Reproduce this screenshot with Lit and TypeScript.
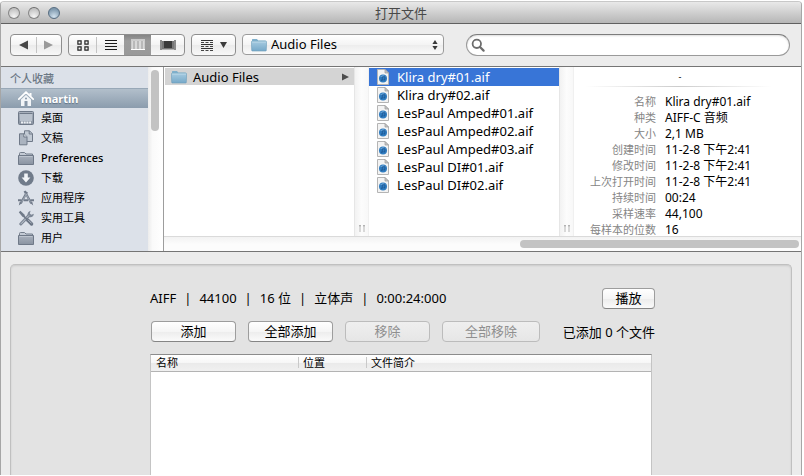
import { LitElement, html, css, svg } from "lit";
import { customElement, state } from "lit/decorators.js";

const folderBlue = svg`<svg class="ico" viewBox="0 0 16 16" width="16" height="16" aria-hidden="true">
  <defs><linearGradient id="fb" x1="0" y1="0" x2="0" y2="1"><stop offset="0" stop-color="#a6cbe0"/><stop offset="1" stop-color="#76a9c9"/></linearGradient></defs>
  <path d="M1 4V2.6Q1 2 1.6 2H6L7.2 3.4H14.4Q15 3.4 15 4V6H1Z" fill="#7fb0cc"/>
  <path d="M0.4 4.8Q0.4 4.3 1 4.3H15Q15.6 4.3 15.6 4.8L15.3 13.4Q15.2 14 14.6 14H1.4Q0.8 14 0.7 13.4Z" fill="url(#fb)" stroke="#6b9dbb" stroke-width=".6"/>
  <path d="M1 5H15" stroke="#c5e0ee" stroke-width=".8"/>
</svg>`;

const audioFile = svg`<svg class="ico" viewBox="0 0 14 16" width="14" height="16" aria-hidden="true">
  <path d="M1.5 .5H9L12.5 4V15.5H1.5Z" fill="#f3f3f3" stroke="#b4b4b4"/>
  <path d="M9 .5V4H12.5Z" fill="#c9c9c9" stroke="#9a9a9a" stroke-width=".7"/>
  <circle cx="7" cy="9.5" r="4" fill="#2f7cc0"/>
  <path d="M4 8A3.6 3.6 0 0 1 10 8Q7 6.6 4 8Z" fill="#9cc8ea"/>
  <path d="M6.3 11.2V8L8.8 7.5V10.7" fill="none" stroke="#1d5590" stroke-width=".8"/>
  <circle cx="5.8" cy="11.2" r=".7" fill="#1d5590"/><circle cx="8.2" cy="10.8" r=".7" fill="#1d5590"/>
</svg>`;

const greyFolder = svg`<path d="M1.5 5V3.5Q1.5 2.5 2.5 2.5H6.5L8 4H14.5V5" fill="#c3cad4" stroke="#737d8b"/><path d="M.5 5.5H15.5V14.5H.5Z" fill="url(#sg)" stroke="#6f7988"/><path d="M1.5 6.5H14.5" stroke="#c3cad3" stroke-width=".8"/>`;

const sideIcons: Record<string, unknown> = {
  home: svg`<path d="M8 1.2L.8 8.2M8 1.2L15.2 8.2" stroke="#fff" stroke-width="1.7" fill="none" stroke-linecap="round"/><path d="M11.5 2H13.5V5.5L11.5 4Z" fill="#fff"/><path d="M8 4L13 8.6V15H3V8.6Z" fill="#f2f5f8"/><path d="M6.5 10H9.5V15H6.5Z" fill="#8797a8"/><circle cx="8" cy="7.6" r="1" fill="#8797a8"/>`,
  desktop: svg`<rect x=".5" y="1.5" width="15" height="13" rx="1" fill="url(#sg)" stroke="#6f7988"/><path d="M1.5 3.5H14.5" stroke="#6f7988"/><rect x="2" y="4" width="12" height="7" fill="#b9c1cc"/><path d="M3 12.5H13" stroke="#edf0f4" stroke-width="2" stroke-dasharray="2 .7"/>`,
  docs: svg`<path d="M6.5 .8H11.5L14.5 3.8V11.5H6.5Z" fill="#c2cad4" stroke="#6f7988"/><path d="M11.2 .8V4H14.5" fill="none" stroke="#6f7988"/><path d="M1.5 3.8H6L9 6.8V14.8H1.5Z" fill="#aab3bf" stroke="#6f7988"/><path d="M5.8 3.8V7H9" fill="#dfe4ea" stroke="#6f7988"/>`,
  folder: greyFolder,
  download: svg`<circle cx="8" cy="8" r="7.8" fill="#707b8a"/><path d="M6.2 3.5H9.8V7.6H12.4L8 12.4L3.6 7.6H6.2Z" fill="#f2f5f8"/>`,
  apps: svg`<g fill="none" stroke="#6f7988" stroke-width="2.2"><path d="M9 2L2.8 13.2"/><path d="M6.6 1L13.2 13.2"/><path d="M0 10.2H3.6M5.8 10.2H10M12.4 10.2H16" stroke-width="2"/></g><path d="M1.6 12L3.8 13.2L.8 15.6Z M12.2 13L14.3 12L15.2 15.4Z" fill="#6f7988"/><path d="M8.2 4L3.6 12.4M7.6 3.2L12.6 12.4" stroke="#bcc4ce" stroke-width=".6"/>`,
  tools: svg`<path d="M2.8 14L10.8 5.6" stroke="#7d8796" stroke-width="3" stroke-linecap="round"/><path d="M9.6 5.8Q9 2 12.6 .8L11.8 3.4L13.3 4.8L15.8 3.8Q15.6 7.8 11.4 7.2Z" fill="#7d8796"/><path d="M3 13.8L11 5.4" stroke="#c0c7d0" stroke-width="1"/><path d="M.8 2.2L2.4 .8L6.6 4.8L7.2 7.8L4.4 6.8Z" fill="#707a89"/><path d="M6 6.4L9.4 9.8" stroke="#707a89" stroke-width="1.6"/><path d="M9.6 10L13.6 14" stroke="#6b7584" stroke-width="3.2" stroke-linecap="round"/><path d="M10 9.8L13.6 13.4" stroke="#b5bdc8" stroke-width=".9"/>`,
};

const places = [
  ["home", "martin"],
  ["desktop", "桌面"],
  ["docs", "文稿"],
  ["folder", "Preferences"],
  ["download", "下载"],
  ["apps", "应用程序"],
  ["tools", "实用工具"],
  ["folder", "用户"],
];

const files = [
  "Klira dry#01.aif",
  "Klira dry#02.aif",
  "LesPaul Amped#01.aif",
  "LesPaul Amped#02.aif",
  "LesPaul Amped#03.aif",
  "LesPaul DI#01.aif",
  "LesPaul DI#02.aif",
];

const details = [
  ["名称", "Klira dry#01.aif"],
  ["种类", "AIFF-C 音频"],
  ["大小", "2,1 MB"],
  ["创建时间", "11-2-8 下午2:41"],
  ["修改时间", "11-2-8 下午2:41"],
  ["上次打开时间", "11-2-8 下午2:41"],
  ["持续时间", "00:24"],
  ["采样速率", "44,100"],
  ["每样本的位数", "16"],
];

@customElement("app-root")
export class AppRoot extends LitElement {
  @state() private place = 0;
  @state() private file = 0;
  @state() private view = 2;

  static styles = css`
    :host {
      display: block;
      box-sizing: border-box;
      min-height: 100vh;
      padding: 1px 2px 1px 0;
      background: #fff;
      font: 13px/18px "Noto Sans", "Noto Sans CJK SC", sans-serif;
      color: #000;
    }
    * { box-sizing: border-box; }
    button, input, select { font: inherit; color: inherit; margin: 0; padding: 0; }
    button { border: 0; background: none; }
    ul, dl, dd { margin: 0; padding: 0; list-style: none; }
    svg { display: block; flex: none; }

    .window {
      display: flex;
      flex-direction: column;
      min-height: calc(100vh - 2px);
      border: 1px solid #a6a6a6;
      border-top-color: #c8c8c8;
      border-bottom: 0;
      border-radius: 4px 4px 0 0;
      background: #ececec;
      overflow: hidden;
    }
    .titlebar {
      display: grid;
      grid-template-columns: 1fr auto 1fr;
      align-items: center;
      height: 22px;
      padding: 0 7px;
      border-bottom: 1px solid #606060;
      background: linear-gradient(#e9e9e9, #b6b6b6);
    }
    .title { margin: 0; font-size: 13px; font-weight: 400; color: #484848; }
    .lights { display: flex; gap: 8px; }
    .light {
      width: 12px;
      height: 12px;
      border: 1px solid #858585;
      border-top-color: #6c6c6c;
      border-radius: 50%;
      background: radial-gradient(circle at 50% 85%, #f5f5f5, #c3c3c3 75%);
    }
    .light.zoom {
      border-color: #566c80;
      background: radial-gradient(circle at 50% 85%, #d2e2ee, #7f99ae 75%);
    }

    .toolbar {
      display: flex;
      align-items: flex-start;
      gap: 6px;
      height: 43px;
      padding: 10px 11px 0 9px;
      border-bottom: 1px solid #757575;
    }
    .group {
      display: flex;
      align-items: center;
      height: 22px;
      border: 1px solid #8e8e8e;
      border-radius: 4px;
      background: linear-gradient(#fff, #f3f3f3 50%, #ebebeb 51%, #f8f8f8);
      overflow: hidden;
    }
    .group.nav { width: 52px; }
    .seg { display: flex; align-items: center; justify-content: center; width: 27px; height: 20px; }
    .wide { width: 33px; }
    .arrange { width: 43px; gap: 7px; }
    .seg.on { background: linear-gradient(#858585, #9c9c9c 30%, #999); }
    .rule { flex: none; width: 1px; height: 16px; background: #c4c4c4; }
    .popup {
      display: flex;
      align-items: center;
      position: relative;
      width: 202px;
      height: 21px;
      margin: 0 16px 0 0;
      border: 1px solid #9b9b9b;
      border-radius: 4px;
      background: linear-gradient(#fff, #f4f4f4 50%, #ececec 51%, #fafafa);
    }
    .popup svg { position: absolute; pointer-events: none; }
    .popup .ico { left: 8px; }
    .popup .updown { right: 5px; }
    .popup select {
      appearance: none;
      width: 100%;
      height: 19px;
      padding: 0 0 1px 28px;
      border: 0;
      background: none;
    }
    .search { display: flex; align-items: center; position: relative; flex: 1; height: 22px; }
    .search svg { position: absolute; left: 5px; }
    .search input {
      appearance: none;
      width: 100%;
      height: 22px;
      padding: 0 12px 0 24px;
      border: 1px solid #9a9a9a;
      border-top-color: #7d7d7d;
      border-radius: 11px;
      background: #fff;
      box-shadow: inset 0 1px 2px #ddd;
      outline: 0;
    }

    .browser { display: flex; border-bottom: 1px solid #757575; background: #fff; }
    .sidebar { width: 147px; padding-bottom: 3px; background: #dce1e9; font-size: 11px; }
    .heading { margin: 0; padding: 3px 0 0 9px; font-size: 11px; font-weight: 500; line-height: 18px; color: #6c7885; }
    .place {
      display: flex;
      align-items: center;
      gap: 7px;
      height: 20px;
      padding-left: 17px;
      color: #000;
      text-decoration: none;
    }
    .latin { font-weight: 500; }
    .place.on {
      border-top: 1px solid #98a8b7;
      background: linear-gradient(#b2bfcb, #8b9cad);
      color: #fff;
      text-shadow: 0 1px 1px #5f7183;
    }
    .place.on span { font-weight: 700; }
    .vtrack {
      width: 16px;
      padding: 3px 4px 0 3px;
      border-right: 1px solid #9d9d9d;
      background: linear-gradient(90deg, #ececec, #fafafa 30%, #fff);
    }
    .vthumb { width: 8px; height: 61px; border-radius: 4px; background: #c3c3c3; }
    .main { display: flex; flex-direction: column; flex: 1; min-width: 0; }
    .columns { display: flex; flex: 1; }
    .column { width: 190px; padding-top: 1px; }
    .column.first { padding-left: 1px; }
    .item {
      display: flex;
      align-items: center;
      width: 100%;
      height: 18px;
      padding: 0 0 1px 7px;
      gap: 7px;
      text-align: left;
      white-space: nowrap;
    }
    .item.open { height: 17px; padding: 0 5px 0 6px; gap: 6px; background: #d4d4d4; line-height: 16px; }
    .item.open .name { flex: 1; }
    .item.on { background: #3875d7; color: #fff; }
    .gutter {
      display: flex;
      align-items: flex-end;
      justify-content: center;
      gap: 2px;
      width: 15px;
      padding-bottom: 4px;
      border-left: 1px solid #e6e6e6;
      border-right: 1px solid #f0f0f0;
      background: linear-gradient(90deg, #f2f2f2, #fcfcfc 50%, #f8f8f8);
    }
    .grip { width: 2px; height: 7px; background: linear-gradient(#a8a8a8, #d8d8d8 30%); }
    .preview { flex: 1; min-width: 0; font-size: 12px; line-height: 16px; }
    .dash {
      margin: 0 30px 7px 12px;
      padding: 2px 0 0 3px;
      height: 20px;
      font-size: 9px;
      line-height: 16px;
      text-align: center;
      border-bottom: 1px solid;
      border-image: linear-gradient(90deg, #fff, #ccc 50%, #fff) 1;
    }
    .details {
      display: grid;
      grid-template-columns: 82px 1fr;
      column-gap: 9px;
      margin-bottom: -2px;
      white-space: nowrap;
    }
    .details dt { text-align: right; font-size: 11px; color: #858585; }
    .details dd { height: 16px; }
    .htrack {
      display: flex;
      justify-content: flex-end;
      height: 15px;
      padding: 3px 2px 0 0;
      border-top: 1px solid #dadada;
      background: linear-gradient(#f2f2f2, #fcfcfc 50%);
    }
    .hthumb { width: 279px; height: 8px; border-radius: 4px; background: #c3c3c3; }

    .panel {
      display: flex;
      flex-direction: column;
      flex: 1;
      margin: 12px 9px 0 9px;
      padding: 23px 136px 0 139px;
      border: 1px solid #c0c0c0;
      border-bottom: 0;
      border-radius: 5px 5px 0 0;
      background: #e3e3e3;
      box-shadow: inset 0 1px 2px #cacaca;
    }
    .info { display: flex; align-items: center; gap: 8px; height: 21px; margin-bottom: 12px; line-height: 20px; }
    .info span { height: 21px; }
    .info .push { margin-left: auto; }
    .actions { display: flex; align-items: center; gap: 12px; margin: 0 0 12px 1px; white-space: nowrap; }
    .btn {
      width: 85px;
      height: 21px;
      border: 1px solid #9d9d9d;
      border-bottom-color: #858585;
      border-radius: 4px;
      background: linear-gradient(#fff, #f5f5f5 50%, #ececec 51%, #fafafa);
      line-height: 19px;
    }
    .btn.small { width: 53px; }
    .btn.large { width: 98px; }
    .btn:disabled { border-color: #bcbcbc; background: linear-gradient(#efefef, #e6e6e6); color: #8f8f8f; }
    .count { margin-left: auto; }
    .list {
      display: flex;
      flex: 1;
      flex-direction: column;
      margin-right: 3px;
      border: 1px solid #c4c4c4;
      border-top-color: #8c8c8c;
      border-bottom: 0;
      background: #fff;
    }
    table { width: 100%; table-layout: fixed; border-collapse: collapse; font-size: 11px; line-height: 15px; }
    th {
      height: 16px;
      padding: 0 0 0 5px;
      border-bottom: 1px solid #b3b3b3;
      background: linear-gradient(#fff, #f6f6f6 50%, #eaeaea 51%, #f0f0f0);
      font-weight: 400;
      text-align: left;
    }
    .c1 { width: 147px; }
    .c2 { width: 68px; }
    th span { display: block; }
    th + th { padding-left: 0; }
    th + th span { height: 11px; padding-left: 4px; border-left: 1px solid #c9c9c9; line-height: 11px; }
  `;

  render() {
    return html`
      <div class="window">
        <header class="titlebar">
          <div class="lights">
            <button class="light" aria-label="关闭"></button>
            <button class="light" aria-label="最小化"></button>
            <button class="light zoom" aria-label="缩放"></button>
          </div>
          <h1 class="title">打开文件</h1>
        </header>
        ${this.toolbar()}
        <section class="browser">
          <nav class="sidebar">
            <h2 class="heading">个人收藏</h2>
            <ul>
              ${places.map(([icon, name], i) => html`<li>
                <a class="place ${i === this.place ? "on" : ""}" href="#" @click=${() => (this.place = i)}>
                  <svg viewBox="0 0 16 16" width="16" height="16" aria-hidden="true">
                    <defs><linearGradient id="sg" x1="0" y1="0" x2="0" y2="1"><stop offset="0" stop-color="#a9b1bd"/><stop offset="1" stop-color="#8993a1"/></linearGradient></defs>
                    ${sideIcons[icon]}
                  </svg><span class=${/^\w/.test(name) ? "latin" : ""}>${name}</span></a></li>`)}
            </ul>
          </nav>
          <div class="vtrack"><div class="vthumb"></div></div>
          <div class="main">
            <div class="columns">
              <div class="column first">
                <button class="item open">${folderBlue}<span class="name">Audio Files</span>
                  <svg viewBox="0 0 7 8" width="7" height="8" aria-hidden="true"><path d="M0 .5L7 4L0 7.5Z" fill="#4c4c4c"/></svg>
                </button>
              </div>
              <div class="gutter"><i class="grip"></i><i class="grip"></i></div>
              <ul class="column">
                ${files.map((name, i) => html`<li><button class="item ${i === this.file ? "on" : ""}" @click=${() => (this.file = i)}>${audioFile}<span>${name}</span></button></li>`)}
              </ul>
              <div class="gutter"><i class="grip"></i><i class="grip"></i></div>
              <div class="preview">
                <div class="dash">-</div>
                <dl class="details">${details.map(([k, v]) => html`<dt>${k}</dt><dd>${v}</dd>`)}</dl>
              </div>
            </div>
            <div class="htrack"><div class="hthumb"></div></div>
          </div>
        </section>
        <section class="panel">
          <div class="info">
            <span>AIFF</span><span>|</span><span>44100</span><span>|</span><span>16 位</span><span>|</span><span>立体声</span><span>|</span><span>0:00:24:000</span>
            <button class="btn small push">播放</button>
          </div>
          <div class="actions">
            <button class="btn">添加</button>
            <button class="btn">全部添加</button>
            <button class="btn" disabled>移除</button>
            <button class="btn large" disabled>全部移除</button>
            <span class="count">已添加 0 个文件</span>
          </div>
          <div class="list">
            <table>
              <thead><tr><th class="c1"><span>名称</span></th><th class="c2"><span>位置</span></th><th><span>文件简介</span></th></tr></thead>
            </table>
          </div>
        </section>
      </div>`;
  }

  private toolbar() {
    const seg = (i: number, label: string, icon: unknown, extra = "") => html`<button
      class="seg ${extra} ${this.view === i ? "on" : ""}" aria-label=${label} @click=${() => (this.view = i)}>${icon}</button>`;
    return html`<div class="toolbar">
      <div class="group nav">
        <button class="seg" aria-label="后退"><svg viewBox="0 0 9 10" width="9" height="10"><path d="M9 .5V9.5L0 5Z" fill="#484848"/></svg></button>
        <span class="rule"></span>
        <button class="seg" aria-label="前进"><svg viewBox="0 0 9 10" width="9" height="10"><path d="M0 .5V9.5L9 5Z" fill="#9a9a9a"/></svg></button>
      </div>
      <div class="group">
        ${seg(0, "图标", html`<svg viewBox="0 0 12 11" width="12" height="11"><g fill="none" stroke="#222" stroke-width="1.2"><path d="M.9 .9H4.1V4.1H.9ZM7.9 .9H11.1V4.1H7.9ZM.9 6.9H4.1V10.1H.9ZM7.9 6.9H11.1V10.1H7.9Z"/></g></svg>`)}
        <span class="rule"></span>
        ${seg(1, "列表", html`<svg viewBox="0 0 12 11" width="12" height="11"><path d="M0 .5H12M0 3.5H12M0 6.5H12M0 9.5H12" stroke="#1c1c1c" stroke-width="1.1"/></svg>`)}
        ${seg(2, "分栏", html`<svg viewBox="0 0 14 12" width="14" height="12"><path d="M0 1H14M0 10.5H14" stroke="#fff" stroke-width="1.2"/><path d="M1 2H13V10H1Z" fill="#b9b9b9"/><path d="M1 2V10M5 2V10M9 2V10M13 2V10" stroke="#f4f4f4" stroke-width="1.1"/></svg>`)}
        ${seg(3, "封面流", html`<svg viewBox="0 0 16 11" width="16" height="11"><path d="M0 0H2V10H0ZM14 0H16V10H14Z" fill="#8a8a8a"/><path d="M2 1H14V9H2Z" fill="#777"/><path d="M4 1H12V8H4Z" fill="#3a3a3a"/><path d="M2 9.5H14" stroke="#b5b5b5"/></svg>`, "wide")}
      </div>
      <div class="group">
        <button class="seg arrange" aria-label="排列">
          <svg viewBox="0 0 12 11" width="12" height="11"><path d="M0 .5H12M0 4.5H12M0 8.5H12" stroke="#333"/><path d="M0 2.5H12M0 6.5H12M0 10.5H12" stroke="#444" stroke-width="1" stroke-dasharray="3 1.5"/></svg>
          <svg viewBox="0 0 7 6" width="7" height="6"><path d="M0 0H7L3.5 6Z" fill="#3c3c3c"/></svg>
        </button>
      </div>
      <div class="popup">
        ${folderBlue}
        <select aria-label="文件夹"><option>Audio Files</option></select>
        <svg class="updown" viewBox="0 0 6 10" width="6" height="10"><path d="M3 0L5.6 4H.4ZM3 10L5.6 6H.4Z" fill="#383838"/></svg>
      </div>
      <div class="search">
        <svg viewBox="0 0 14 14" width="14" height="14"><circle cx="5.8" cy="5.8" r="4.2" fill="none" stroke="#6d6d6d" stroke-width="1.8"/><path d="M9 9L12.6 12.6" stroke="#6d6d6d" stroke-width="2.2" stroke-linecap="round"/></svg>
        <input type="search" aria-label="搜索" />
      </div>
    </div>`;
  }
}
